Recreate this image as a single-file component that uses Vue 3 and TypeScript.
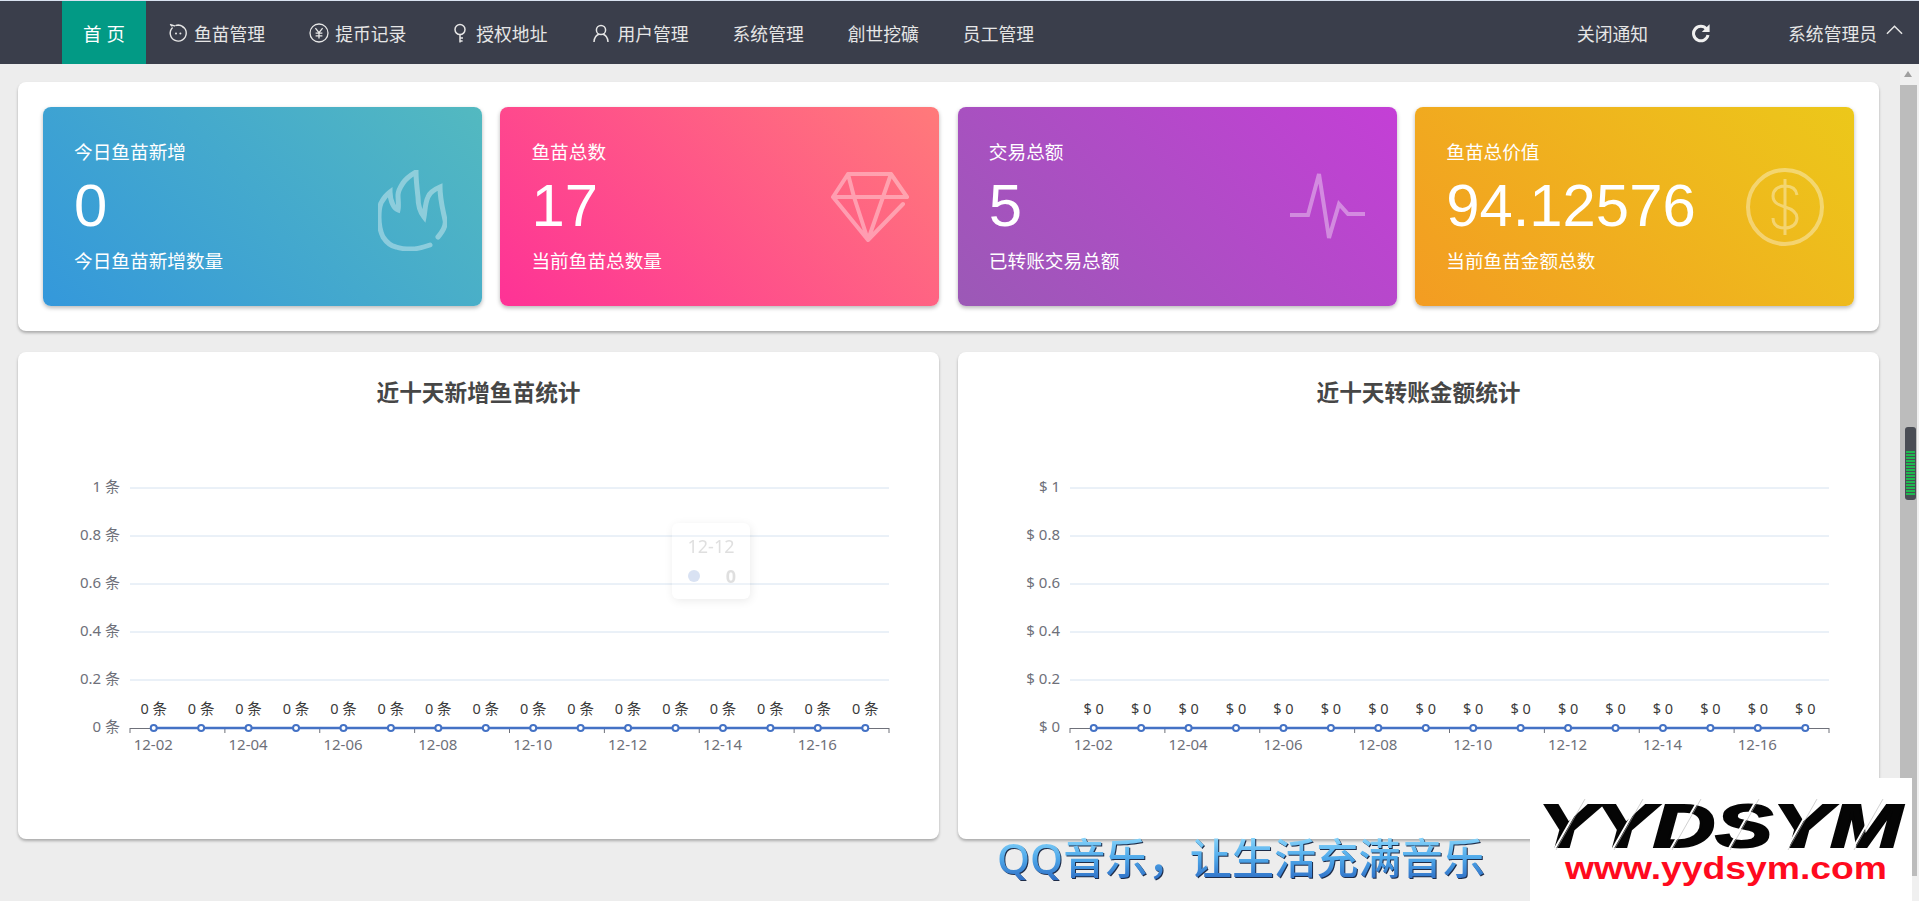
<script setup lang="ts">
const navItems = [
  { label: '鱼苗管理', icon: 'pig' },
  { label: '提币记录', icon: 'yen' },
  { label: '授权地址', icon: 'key' },
  { label: '用户管理', icon: 'user' },
  { label: '系统管理', icon: '' },
  { label: '創世挖礦', icon: '' },
  { label: '员工管理', icon: '' },
]

const stats = [
  { title: '今日鱼苗新增', value: '0', sub: '今日鱼苗新增数量', tone: 'blue', icon: 'flame' },
  { title: '鱼苗总数', value: '17', sub: '当前鱼苗总数量', tone: 'pink', icon: 'gem' },
  { title: '交易总额', value: '5', sub: '已转账交易总额', tone: 'purple', icon: 'pulse' },
  { title: '鱼苗总价值', value: '94.12576', sub: '当前鱼苗金额总数', tone: 'orange', icon: 'coin' },
]

const days = Array.from({ length: 16 }, (_, i) => `12-${String(i + 2).padStart(2, '0')}`)
const levels = [0, 0.2, 0.4, 0.6, 0.8, 1]

const axisLeft = 112
const axisRight = 871
const zeroY = 308
const step = (axisRight - axisLeft) / days.length
const pointX = (i: number) => axisLeft + step * (i + 0.5)
const levelY = (v: number) => zeroY - v * 240

const charts = [
  { title: '近十天新增鱼苗统计', format: (v: number) => `${v} 条`, tooltip: true },
  { title: '近十天转账金额统计', format: (v: number) => `$ ${v}`, tooltip: false },
]

const meterBars = Array.from({ length: 15 }, (_, i) => i)
const scratches = [24, 82, 140, 198, 256, 322]
</script>

<template>
  <div class="app">
    <header class="topbar">
      <nav class="nav">
        <a class="nav-item active">首 页</a>
        <a v-for="item in navItems" :key="item.label" class="nav-item">
          <svg v-if="item.icon === 'pig'" class="nav-icon" viewBox="0 0 20 20" fill="none" stroke="currentColor" stroke-width="1.4">
            <path d="M4 3.2 C3 2.4 2.6 1.6 2.4 1 M7 3 C5.6 2.6 4.5 2.2 3.4 2" />
            <path d="M4.6 4.4 A8 8 0 1 0 7.4 2.6 C10 1.8 14 2.2 16 5" />
            <circle cx="8" cy="10.5" r="1" fill="currentColor" stroke="none" />
            <circle cx="12.4" cy="10.5" r="1" fill="currentColor" stroke="none" />
          </svg>
          <svg v-else-if="item.icon === 'yen'" class="nav-icon" viewBox="0 0 20 20" fill="none" stroke="currentColor" stroke-width="1.3">
            <circle cx="10" cy="10" r="9" />
            <path d="M6.4 5.2 L10 9.6 L13.6 5.2 M10 9.6 V15.4 M6.6 10.2 H13.4 M6.6 12.8 H13.4" />
          </svg>
          <svg v-else-if="item.icon === 'key'" class="nav-icon" viewBox="0 0 20 20" fill="none" stroke="currentColor" stroke-width="1.5">
            <circle cx="10" cy="6.6" r="5" />
            <path d="M10 11.6 V19.6 M10 15 H13 M10 18 H12.6" />
          </svg>
          <svg v-else-if="item.icon === 'user'" class="nav-icon" viewBox="0 0 20 20" fill="none" stroke="currentColor" stroke-width="1.5">
            <circle cx="10" cy="7" r="4.6" />
            <path d="M3 19 C3 14.5 6 11.6 8 11.2 M17 19 C17 14.5 14 11.6 12 11.2" />
          </svg>
          <span>{{ item.label }}</span>
        </a>
      </nav>
      <div class="top-actions">
        <a class="notice">关闭通知</a>
        <svg class="refresh" viewBox="0 0 20 20" fill="none">
          <path d="M15.6 6 A7.3 7.3 0 1 0 17 12" stroke="#f0f0f0" stroke-width="3" />
          <path d="M18.6 1.2 V9 H10.8 Z" fill="#f0f0f0" />
        </svg>
        <a class="account">系统管理员</a>
        <svg class="chevron" viewBox="0 0 18 10" fill="none">
          <path d="M1 9 L9 1 L17 9" stroke="#e6e6e6" stroke-width="1.6" />
        </svg>
      </div>
    </header>

    <div class="workspace">
      <main class="content">
        <section class="panel stat-panel">
          <div v-for="stat in stats" :key="stat.title" class="stat" :class="stat.tone">
            <div class="stat-text">
              <div class="stat-title">{{ stat.title }}</div>
              <div class="stat-value">{{ stat.value }}</div>
              <div class="stat-sub">{{ stat.sub }}</div>
            </div>
            <svg v-if="stat.icon === 'flame'" class="stat-icon flame" viewBox="0 0 69 81" fill="none" stroke="#fff" stroke-width="5" stroke-linecap="round">
              <path d="M60 67 C66 60 68 54 67 50 C65 40 62 30 62 17 C55 20 51 24 50 27 C47 33 47 42 46 47 C42 42 40 35 40 27 C39 18 38 10 38 2 C31 6 27 10 25 13 C21 19 20 22 20 25 C20 30 21 36 20 40 C17 39 16 37 15 35 C13 31 12 27 12 22 C8 25 5 29 3 33 C1 38 1 43 1 47 C1 55 2 61 5 67 C9 73 13 76 18 77 C24 79 29 79 33 79 C40 79 46 77 52 75" />
            </svg>
            <svg v-else-if="stat.icon === 'gem'" class="stat-icon gem" viewBox="0 0 78 70" fill="none" stroke="#fff" stroke-width="4" stroke-linecap="round" stroke-linejoin="round">
              <path d="M72 32 L37 68 L2 25 L17 2 H60 L76 25 H2 M17 2 L23 25 L37 68 L52 25 L60 2" />
            </svg>
            <svg v-else-if="stat.icon === 'pulse'" class="stat-icon pulse" viewBox="0 0 75 72" fill="none" stroke="#fff" stroke-width="4">
              <path d="M0 44 H18 L29 3 L39 67 L49 33 L58 43 H75" />
            </svg>
            <svg v-else class="stat-icon coin" viewBox="0 0 78 78" fill="none" stroke="#fff">
              <circle cx="39" cy="39" r="37" stroke-width="4" />
              <path d="M51 27 C50 20 45 18 39 18 C32 18 27 22 27 28 C27 35 33 37 39 39 C46 41 51 44 51 50 C51 56 46 60 39 60 C32 60 27 57 27 50 M39 11 V67" stroke-width="3" />
            </svg>
          </div>
        </section>

        <div class="chart-row">
          <section v-for="chart in charts" :key="chart.title" class="panel chart-panel">
            <h2 class="chart-title">{{ chart.title }}</h2>
            <svg class="chart" viewBox="0 0 921 419">
              <g v-for="v in levels" :key="v">
                <line v-if="v > 0" :x1="axisLeft" :x2="axisRight" :y1="levelY(v)" :y2="levelY(v)" stroke="#d5e2f0" />
                <text class="tick" :x="102" :y="levelY(v) - 2.5" text-anchor="end" dominant-baseline="central">{{ chart.format(v) }}</text>
              </g>
              <line :x1="axisLeft" :x2="axisRight" :y1="zeroY + 0.5" :y2="zeroY + 0.5" stroke="#6e7079" />
              <line
                v-for="i in 9"
                :key="'t' + i"
                :x1="axisLeft + step * 2 * (i - 1)"
                :x2="axisLeft + step * 2 * (i - 1)"
                :y1="zeroY"
                :y2="zeroY + 5"
                stroke="#6e7079"
              />
              <line :x1="pointX(0)" :x2="pointX(15)" :y1="zeroY" :y2="zeroY" stroke="#4472c5" stroke-width="2.5" />
              <g v-for="(day, i) in days" :key="day">
                <circle :cx="pointX(i)" :cy="zeroY" r="3" fill="#fff" stroke="#4472c5" stroke-width="2" />
                <text class="point-label" :x="pointX(i)" y="288" text-anchor="middle" dominant-baseline="central">{{ chart.format(0) }}</text>
                <text v-if="i % 2 === 0" class="tick" :x="pointX(i) - 0.5" y="324" text-anchor="middle" dominant-baseline="central">{{ day }}</text>
              </g>
            </svg>
            <div v-if="chart.tooltip" class="tooltip">
              <div class="tooltip-day">12-12</div>
              <div class="tooltip-row">
                <i class="tooltip-dot"></i>
                <b>0</b>
              </div>
            </div>
          </section>
        </div>
      </main>

      <aside class="scrollbar">
        <i class="scroll-arrow"></i>
        <div class="scroll-thumb"></div>
      </aside>
    </div>

    <div class="lyric">QQ音乐，让生活充满音乐</div>

    <div class="player-meter">
      <i v-for="n in meterBars" :key="n"></i>
    </div>

    <svg class="watermark" viewBox="0 0 382 123">
      <text class="mark-name" x="8" y="69" textLength="364" lengthAdjust="spacingAndGlyphs">YYDSYM</text>
      <g v-for="x in scratches" :key="x">
        <line :x1="x" y1="72" :x2="x + 29" y2="21" stroke="#fff" stroke-width="2" />
        <line :x1="x + 2" y1="72" :x2="x + 31" y2="21" stroke="#b0b0b0" stroke-width="0.6" />
      </g>
      <text class="mark-url" x="35" y="101" textLength="322" lengthAdjust="spacingAndGlyphs">www.yydsym.com</text>
    </svg>
  </div>
</template>

<style>
html,
body {
  margin: 0;
  overflow: hidden;
  background: #ededed;
}
</style>

<style scoped>
.app {
  position: relative;
  display: flex;
  flex-direction: column;
  height: 100vh;
  overflow: hidden;
  background: #ededed;
  font-family: "Noto Sans", "Noto Sans CJK SC", sans-serif;
}

.topbar {
  display: flex;
  flex: none;
  justify-content: space-between;
  height: 63px;
  padding: 0 16px 0 62px;
  border-top: 1px solid #d9e2f0;
  background: #3a3e4b;
  color: #e6e6e6;
  font-size: 17.8px;
}

.nav,
.top-actions {
  display: flex;
  align-items: center;
  height: 100%;
}

.nav-item {
  display: flex;
  align-items: center;
  gap: 6px;
  height: 100%;
  padding: 0 22px;
  white-space: nowrap;
}

.nav-item.active {
  width: 84px;
  box-sizing: border-box;
  justify-content: center;
  padding: 0;
  background: #029a85;
  color: #fff;
  font-size: 18.5px;
}

.nav-icon {
  width: 20px;
  height: 20px;
  flex: none;
}

.notice {
  white-space: nowrap;
}

.refresh {
  width: 20px;
  height: 20px;
  margin-left: 43px;
}

.account {
  margin-left: 77px;
  white-space: nowrap;
}

.chevron {
  width: 17px;
  height: 10px;
  margin-left: 9px;
  margin-bottom: 5px;
}

.workspace {
  display: flex;
  flex: 1;
  min-height: 0;
}

.content {
  display: flex;
  flex-direction: column;
  gap: 21px;
  flex: 1;
  min-width: 0;
  padding: 18px 21px 0 18px;
}

.panel {
  position: relative;
  border-radius: 8px;
  background: #fff;
  box-shadow: 0 2px 3px rgba(0, 0, 0, 0.28);
}

.stat-panel {
  display: grid;
  grid-template-columns: repeat(4, 1fr);
  gap: 18.67px;
  height: 249px;
  box-sizing: border-box;
  padding: 25px;
}

.stat {
  display: flex;
  align-items: center;
  justify-content: space-between;
  border-radius: 8px;
  padding: 0 25px 0 31px;
  box-shadow: 0 2px 4px rgba(0, 0, 0, 0.28);
  color: #fff;
}

.blue {
  background: linear-gradient(45deg, #3498db, #53b9c0);
}

.pink {
  background: linear-gradient(45deg, #fe3296, #ff7a7a);
}

.purple {
  background: linear-gradient(45deg, #9b59b6, #c43fd6);
}

.orange {
  background: linear-gradient(45deg, #f39c22, #ecc81a);
}

.stat-title,
.stat-sub {
  font-size: 18.67px;
  line-height: 26px;
}

.stat-value {
  margin: 8.5px 0 9px;
  font-family: "Liberation Sans", sans-serif;
  font-size: 59.8px;
  line-height: 66px;
}

.stat-icon {
  flex: none;
  opacity: 0.37;
}

.flame {
  width: 69px;
  height: 81px;
  margin-top: 7px;
  margin-right: 10px;
}

.gem {
  width: 78px;
  height: 70px;
  margin-right: 5px;
}

.pulse {
  width: 75px;
  height: 72px;
  margin-right: 7px;
}

.coin {
  width: 78px;
  height: 78px;
  margin-right: 5px;
}

.chart-row {
  display: grid;
  grid-template-columns: 1fr 1fr;
  gap: 19px;
}

.chart-panel {
  height: 487px;
}

.chart-title {
  height: 40px;
  margin: 0;
  padding-top: 28px;
  color: #464646;
  font-size: 22.67px;
  font-weight: 700;
  line-height: 26px;
  text-align: center;
}

.chart {
  display: block;
  width: 100%;
  height: 419px;
}

.tick {
  fill: #6e7079;
  font-size: 15px;
}

.point-label {
  fill: #3a3a3a;
  font-size: 14.5px;
}

.tooltip {
  position: absolute;
  top: 171px;
  left: 654px;
  width: 78px;
  height: 76px;
  box-sizing: border-box;
  padding: 10px 14px;
  border-radius: 6px;
  background: #fff;
  box-shadow: 1px 2px 10px rgba(0, 0, 0, 0.4);
  opacity: 0.2;
  color: #666;
  font-size: 18px;
  line-height: 26px;
  text-align: center;
}

.tooltip-row {
  display: flex;
  align-items: center;
  justify-content: space-between;
  margin-top: 4px;
  padding-left: 2px;
}

.tooltip-dot {
  width: 12px;
  height: 12px;
  border-radius: 50%;
  background: #4472c5;
}

.scrollbar {
  position: relative;
  flex: none;
  width: 19px;
  background: #f0f0f0;
}

.scroll-arrow {
  position: absolute;
  top: 7px;
  left: 4px;
  width: 0;
  height: 0;
  border: 4.5px solid transparent;
  border-top: 0;
  border-bottom: 6px solid #a0a0a0;
}

.scroll-thumb {
  position: absolute;
  top: 21px;
  bottom: 25px;
  left: 0;
  width: 17px;
  background: #bcbcbc;
}

.lyric {
  position: absolute;
  top: 836px;
  left: 997px;
  background: linear-gradient(180deg, #8ad6fb 0%, #4fa9ea 50%, #2f6fc6 100%);
  -webkit-background-clip: text;
  background-clip: text;
  color: transparent;
  filter: drop-shadow(1.5px 1.5px 0 #1e2c48);
  font-size: 42.2px;
  font-weight: 500;
  line-height: 44px;
  white-space: nowrap;
}

.player-meter {
  position: absolute;
  top: 427px;
  left: 1905px;
  display: flex;
  flex-direction: column;
  gap: 1px;
  width: 11px;
  height: 73px;
  box-sizing: border-box;
  padding: 24px 1px 3px;
  border-radius: 3px;
  background: #4a4d55;
}

.player-meter i {
  height: 2px;
  background: #1fb84f;
}

.watermark {
  position: absolute;
  top: 778px;
  left: 1530px;
  width: 382px;
  height: 123px;
  background: #fff;
}

.mark-name {
  fill: #050505;
  stroke: #050505;
  stroke-width: 2px;
  font-family: "Liberation Sans", sans-serif;
  font-size: 62px;
  font-style: italic;
  font-weight: 700;
}

.mark-url {
  fill: #ff0a1e;
  font-family: "Liberation Sans", sans-serif;
  font-size: 32px;
  font-weight: 700;
}
</style>
